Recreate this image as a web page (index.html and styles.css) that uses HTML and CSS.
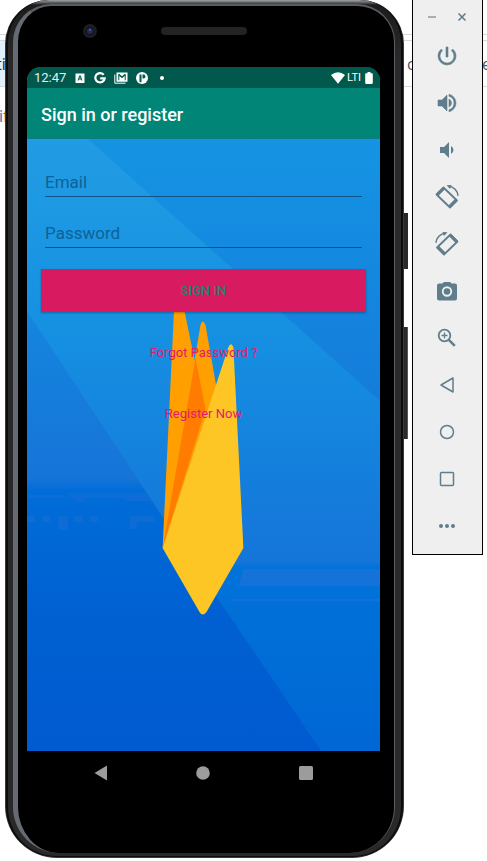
FILE: index.html
```html
<!DOCTYPE html>
<html lang="en">
<head>
<meta charset="utf-8">
<meta name="viewport" content="width=device-width, initial-scale=1">
<title>Sign in or register</title>
<link rel="stylesheet" href="styles.css">
</head>
<body>
<div class="editor" aria-hidden="true">
  <div class="editor-tabs"></div>
  <div class="editor-row"><span class="editor-sel">ti</span><span class="editor-end"><span class="editor-c">c</span><span>e</span></span></div>
  <div class="editor-code">i<span class="editor-f">f</span></div>
</div>
<div class="desktop">
  <main class="phone">
    <span class="side-key power-key"></span>
    <span class="side-key volume-key"></span>
    <div class="rim">
      <div class="glass">
        <div class="earpiece">
          <svg class="camera" viewBox="0 0 14 14"><circle cx="7" cy="7" r="7" fill="#1e1e20"/><circle cx="7" cy="7" r="4.5" fill="#15151f"/><circle cx="7" cy="7" r="3" fill="#202a58"/><circle cx="7" cy="6" r="1" fill="#53669a"/></svg>
          <span class="speaker"></span>
        </div>
        <div class="screen">
          <div class="status">
            <span class="clock">12:47</span>
            <svg class="s-icon" viewBox="0 0 12 12"><path fill="#fff" fill-rule="evenodd" d="M1.500 1.500h9v9.500h-9zM5.300 3.500 3.600 8.500h1.100l.3-1h2l.3 1h1.100L6.700 3.500zM6 4.800l.6 1.800H5.400z"/></svg>
            <svg class="s-icon" viewBox="0 0 12 12"><path fill="none" stroke="#fff" stroke-width="2.200" d="M9.700 2.800A4.700 4.700 0 1 0 10.700 6.400H6.200"/></svg>
            <svg class="s-icon wide" viewBox="0 0 14 12"><path fill="none" stroke="#fff" d="M.8 2.500v8.700h10.700"/><path fill="#fff" fill-rule="evenodd" d="M2.500.5h11v9.300h-11zM4.300 2v6.300h1V4L8 6.200 10.700 4v4.300h1V2h-1L8 4.200 5.300 2z"/></svg>
            <svg class="s-icon" viewBox="0 0 12 12"><circle cx="6" cy="6" r="6" fill="#fff"/><path fill="#00594c" d="M3.500 2.500h2v7.800a5 5 0 0 1-2-.6zM6.500 2.500h1a2 2 0 0 1 0 4h-1z"/></svg>
            <span class="dot"></span>
            <span class="signals">
              <svg class="wifi" viewBox="0 0 14 12"><path fill="#fff" d="M0 3Q7-2.500 14 3L7 11.700z"/></svg>
              <span class="lte">LTI</span>
              <svg class="battery" viewBox="0 0 8 12"><path fill="#fff" d="M2.500 0h3v1.300H7q.8 0 .8.800v9q0 .800-.8.800H1q-.8 0-.8-.800v-9q0-.800.8-.800h1.500z"/></svg>
            </span>
          </div>
          <header class="appbar"><h1>Sign in or register</h1></header>
          <div class="content">
            <svg class="art" viewBox="0 0 354 612" preserveAspectRatio="none">
              <defs>
                <linearGradient id="top" x1="0" y1="0" x2="0" y2="1"><stop offset="0" stop-color="#1594e3"/><stop offset="1" stop-color="#147cdb"/></linearGradient>
                <linearGradient id="mid" gradientUnits="userSpaceOnUse" x1="0" y1="0" x2="0" y2="612"><stop offset="0" stop-color="#219ce3"/><stop offset=".3" stop-color="#1691e2"/><stop offset=".6" stop-color="#147bdb"/><stop offset=".69" stop-color="#1575d9"/><stop offset=".7" stop-color="#0073d9"/><stop offset="1" stop-color="#0067d4"/></linearGradient>
                <linearGradient id="low" gradientUnits="userSpaceOnUse" x1="0" y1="172" x2="0" y2="612"><stop offset="0" stop-color="#1586df"/><stop offset=".38" stop-color="#1674d8"/><stop offset=".41" stop-color="#006dd8"/><stop offset=".7" stop-color="#0060d2"/><stop offset="1" stop-color="#005bd0"/></linearGradient>
              </defs>
              <path fill="url(#mid)" d="M0 0h354v612H0z"/>
              <path fill="url(#top)" d="M61 0h293v262z"/>
              <path fill="url(#low)" d="M0 172 136 378 295 612H0z"/>
              <path fill="#1972d9" opacity=".8" d="M217 430h137v17H212zM204 460h150v2H204z"/>
              <path fill="#1a6ed6" opacity=".55" d="M0 356h38v3H0zM40 354h80l6 8H98v-3H58v4h-8zM0 377h8v6H0zM16 377h7v6h-7zM31 377h10v14h-9zM47 377h9v6h-9zM63 377h8v6h-8zM103 377h25v6h-18v7h-7z"/>
              <path fill="#ffa000" d="M136 409 148 160Q150 150 154 153L178 269z"/>
              <path fill="#ffa000" d="M136 409 174 186Q176 179 179 186L191 254z"/>
              <path fill="#ff7c00" d="M136 409 169 219 179 270z"/>
              <path fill="#fec625" d="M136 409 202 208Q205 202 207 209L217 409 180 473Q176 478 173 473z"/>
            </svg>
            <form class="form">
              <label class="field"><input type="email" placeholder="Email" aria-label="Email"></label>
              <label class="field"><input type="password" placeholder="Password" aria-label="Password"></label>
              <button class="submit" type="button">SIGN IN</button>
              <a class="link" href="#">Forgot Password ?</a>
              <a class="link" href="#">Register Now</a>
            </form>
          </div>
        </div>
        <nav class="navbar">
          <button type="button" aria-label="Back"><svg viewBox="0 0 16 16"><path fill="#9c9c9c" d="M1.500 8 14 .5v15z"/></svg></button>
          <button type="button" aria-label="Home"><svg viewBox="0 0 16 16"><circle cx="8" cy="8" r="6.800" fill="#9c9c9c"/></svg></button>
          <button type="button" aria-label="Recent apps"><svg viewBox="0 0 16 16"><rect x="1" y="1" width="14" height="14" rx="1.500" fill="#9c9c9c"/></svg></button>
        </nav>
      </div>
    </div>
  </main>
  <aside class="tools">
    <div class="window-row">
      <button type="button" aria-label="Minimize"><svg viewBox="0 0 10 10"><path fill="none" stroke="#9fb2bb" stroke-width="2" d="M1 5h8"/></svg></button>
      <button type="button" aria-label="Close"><svg viewBox="0 0 10 10"><path fill="none" stroke="#607d8b" stroke-width="1.600" d="m1.500 1.500 7 7m0-7-7 7"/></svg></button>
    </div>
    <button class="tool" type="button" aria-label="Power"><svg viewBox="0 0 24 24"><path fill="#607d8b" d="M13 3h-2v10h2zm4.830 2.170-1.420 1.420A6.920 6.920 0 0 1 19 12a7 7 0 1 1-11.420-5.420L6.170 5.170A8.930 8.930 0 0 0 3 12a9 9 0 1 0 18 0c0-2.740-1.230-5.180-3.170-6.830z" stroke="#607d8b" stroke-width=".6"/></svg></button>
    <button class="tool" type="button" aria-label="Volume up"><svg viewBox="0 0 24 24"><path fill="#607d8b" d="M3 9v6h4l5 5V4L7 9zm13.500 3A4.500 4.500 0 0 0 14 7.970v8.050A4.470 4.470 0 0 0 16.500 12zM14 3.230v2.060a7 7 0 0 1 0 13.420v2.060a9 9 0 0 0 0-17.540z" stroke="#607d8b" stroke-width=".6"/></svg></button>
    <button class="tool" type="button" aria-label="Volume down"><svg viewBox="0 0 24 24"><path fill="#607d8b" d="M18.500 12A4.500 4.500 0 0 0 16 7.970v8.050A4.470 4.470 0 0 0 18.500 12zM5 9v6h4l5 5V4L9 9z"/></svg></button>
    <button class="tool" type="button" aria-label="Rotate left"><svg viewBox="0 0 24 24"><g fill="none" stroke="#607d8b"><path stroke-width="1.800" stroke-linejoin="round" d="M1.500 9.500 8.500 2.500 22 15.500l-7 7z"/><path stroke-width="3" d="m2.200 10 7-7M14.300 21.800l7-7"/><path stroke-width="1.600" d="M13.500 1.300a10 10 0 0 1 9.500 9.500"/></g><path fill="#607d8b" d="m11.500.2 5-.2-1.500 4z"/></svg></button>
    <button class="tool" type="button" aria-label="Rotate right"><svg class="flip" viewBox="0 0 24 24"><g fill="none" stroke="#607d8b"><path stroke-width="1.800" stroke-linejoin="round" d="M1.500 9.500 8.500 2.500 22 15.500l-7 7z"/><path stroke-width="3" d="m2.200 10 7-7M14.300 21.800l7-7"/><path stroke-width="1.600" d="M13.500 1.300a10 10 0 0 1 9.500 9.500"/></g><path fill="#607d8b" d="m11.500.2 5-.2-1.500 4z"/></svg></button>
    <button class="tool" type="button" aria-label="Take screenshot"><svg viewBox="0 0 24 24"><path fill="#607d8b" fill-rule="evenodd" d="M9 3 7.300 4.500H4Q2 4.500 2 6.500v13q0 2 2 2h16q2 0 2-2v-13q0-2-2-2h-3.300L15 3zM12 7.300a5.200 5.200 0 1 1 0 10.400 5.200 5.200 0 0 1 0-10.400z"/><circle cx="12" cy="12.500" r="3.300" fill="#607d8b"/></svg></button>
    <button class="tool" type="button" aria-label="Zoom"><svg viewBox="0 0 24 24"><g fill="none" stroke="#607d8b"><circle cx="9.500" cy="9.500" r="5.800" stroke-width="1.800"/><path stroke-width="1.300" d="M6.500 9.500h6M9.500 6.500v6"/><path stroke-width="2.500" d="m13.800 13.800 6 6"/></g></svg></button>
    <button class="tool" type="button" aria-label="Back"><svg viewBox="0 0 24 24"><path fill="none" stroke="#607d8b" stroke-width="1.500" stroke-linejoin="round" d="M6 12 18 5v14z"/></svg></button>
    <button class="tool" type="button" aria-label="Home"><svg viewBox="0 0 24 24"><circle cx="12" cy="12" r="6.500" fill="none" stroke="#607d8b" stroke-width="1.500"/></svg></button>
    <button class="tool" type="button" aria-label="Overview"><svg viewBox="0 0 24 24"><rect x="5.500" y="5.500" width="13" height="13" rx="1" fill="none" stroke="#607d8b" stroke-width="1.500"/></svg></button>
    <button class="tool" type="button" aria-label="More"><svg viewBox="0 0 24 24"><g fill="#607d8b"><circle cx="6" cy="12" r="2"/><circle cx="12" cy="12" r="2"/><circle cx="18" cy="12" r="2"/></g></svg></button>
  </aside>
</div>
</body>
</html>
```

FILE: styles.css
```css
* { box-sizing: border-box; }

body {
  margin: 0;
  background: #fff;
  font-family: Roboto, "Liberation Sans", sans-serif;
}

button {
  display: grid;
  place-items: center;
  padding: 0;
  border: 0;
  background: none;
  font: inherit;
}

svg { display: block; }

/* Editor window behind the emulator */
.editor {
  position: absolute;
  inset: 0 0 auto;
  padding-top: 34px;
  font: 16px/46px "Open Sans", sans-serif;
  color: #555;
  overflow: hidden;
}
.editor-tabs {
  height: 7px;
  border: solid #d8d8d8;
  border-width: 1px 0;
}
.editor-row {
  display: flex;
  justify-content: space-between;
  height: 46px;
  border-bottom: 1px solid #d8d8d8;
}
.editor-sel {
  width: 12px;
  background: #e0f0fd;
  color: #222;
  text-indent: -4px;
}
.editor-end {
  display: flex;
  justify-content: space-between;
  width: 84px;
  margin-right: -4px;
}
.editor-c { border-right: 1px solid #d89a4a; }
.editor-code { color: #3d6db5; line-height: 58px; text-indent: -1px; }
.editor-f { color: #b5532a; }

.desktop {
  position: relative;
  display: flex;
  align-items: flex-start;
  gap: 8px;
  padding: 0 4px 2px 5px;
}

/* Phone body */
.phone {
  position: relative;
  flex: 1;
  min-width: 0;
  padding: 0 1px 1px;
  border-radius: 44px 44px 52px 52px;
  background: #3a3a3a;
}
.rim {
  padding: 4px 6px 3px 5px;
  border: solid #0c0c0c;
  border-width: 0 2px 1px 2px;
  border-radius: 43px 43px 50px 50px;
  background: linear-gradient(#a0a5a7, #1c1c1c 5px, #292929 60px);
}
.glass {
  padding: 2px 14px 72px 9px;
  border: solid #5c5c64;
  border-width: 2px 1px 0 5px;
  border-left-color: #666a72;
  border-radius: 38px 38px 46px 46px;
  background: #000;
}
.side-key {
  position: absolute;
  left: 100%;
  width: 4px;
  background: #292929;
}
.power-key { top: 213px; height: 56px; }
.volume-key { top: 327px; height: 112px; border-right: 1px solid #555; }

.earpiece {
  display: grid;
  grid-template-columns: 1fr 86px 1fr;
  align-items: center;
  height: 45px;
  margin-bottom: 14px;
}
.camera { width: 14px; margin-left: 56px; }
.speaker { height: 8px; border-radius: 4px; background: #232323; }

.screen {
  overflow: hidden;
  border-radius: 14px 14px 0 0;
  background: #008577;
}
.status {
  display: flex;
  align-items: center;
  gap: 8px;
  height: 21px;
  padding: 0 7px;
  background: #00594c;
  color: #fff;
  font-size: 13px;
}
.clock { color: #e4efed; }
.s-icon { width: 12px; height: 12px; }
.s-icon.wide { width: 14px; }
.dot { width: 4px; height: 4px; margin-left: 4px; border-radius: 2px; background: #fff; }
.signals { display: flex; align-items: center; gap: 2px; margin-left: auto; }
.wifi { width: 14px; height: 12px; }
.lte { font-size: 11px; }
.battery { width: 8px; height: 12px; margin-left: 2px; }

.appbar {
  position: relative;
  display: flex;
  align-items: center;
  height: 51px;
  padding: 2px 14px 0;
  border-bottom: 1px solid #0b7c82;
  background: #008577;
  color: #fff;
}
.appbar h1 { margin: 0; font-size: 18px; font-weight: 500; }

/* Sign-in form over the artwork */
.content { position: relative; min-height: 612px; }
.art { position: absolute; inset: 0; width: 100%; height: 100%; }
.form {
  position: relative;
  display: flex;
  flex-direction: column;
  align-items: center;
  padding: 21px 14px;
}
.field { width: 100%; height: 51px; padding: 0 4px; }
.field input {
  display: block;
  width: 100%;
  height: 37px;
  padding: 8px 0 0;
  border: 0;
  border-bottom: 1px solid #0b5485;
  border-radius: 0;
  outline: 0;
  background: none;
  color: #0b4f78;
  font: 17px Roboto, sans-serif;
}
.field input::placeholder { color: #0d6298; opacity: 1; }
.submit {
  width: 100%;
  height: 43px;
  margin: 7px 0 30px;
  background: #d81b60;
  box-shadow: 0 1px 2px rgba(0, 0, 0, .3);
  color: #24806f;
  font-size: 13px;
  font-weight: 500;
}
.link {
  margin-bottom: 39px;
  color: #e01b6c;
  font-size: 13px;
  line-height: 22px;
  text-decoration: none;
}

.navbar {
  display: flex;
  justify-content: space-around;
  padding: 14px 23px 0;
}
.navbar svg { width: 16px; height: 16px; }

/* Emulator tool strip */
.tools {
  flex: none;
  display: flex;
  flex-direction: column;
  align-items: stretch;
  width: 71px;
  padding-bottom: 5px;
  border: solid #000;
  border-width: 0 1px 1px;
  background: #efefef;
}
.window-row {
  display: flex;
  justify-content: center;
  gap: 20px;
  padding: 12px 2px 10px 0;
}
.window-row svg { width: 10px; height: 10px; }
.tool { height: 47px; padding-right: 2px; }
.tool svg { width: 24px; height: 24px; }
.flip { transform: scaleX(-1); }
```
